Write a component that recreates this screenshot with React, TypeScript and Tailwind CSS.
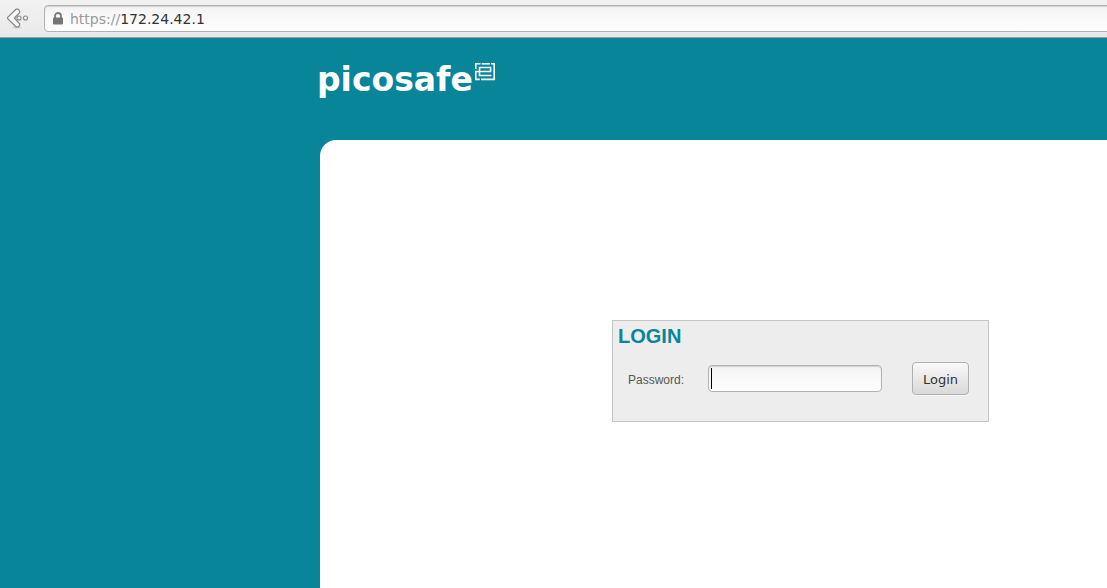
import React from "react";

function BackIcon() {
  return (
    <svg width="24" height="24" viewBox="0 0 24 24" fill="none" aria-hidden="true">
      <ellipse cx="12" cy="20.5" rx="4.5" ry="1" fill="#cfcfcf" />
      <path
        d="M11 2.2 2.6 10.4v1.2l8.4 8.2h2.2l1.4-1.4v-1.6L9.4 11l5.2-5.4V4L13.2 2.2Z"
        fill="#f6f6f6"
        stroke="#858585"
        strokeWidth="1.2"
        strokeLinejoin="round"
      />
      <circle cx="14" cy="11" r="2" fill="#f8f8f8" stroke="#858585" strokeWidth="1.1" />
      <circle cx="20.5" cy="11" r="2" fill="#f8f8f8" stroke="#858585" strokeWidth="1.1" />
    </svg>
  );
}

function LockIcon() {
  return (
    <svg width="12" height="13" viewBox="0 0 12 13" fill="none" aria-hidden="true">
      <path d="M3 6V4a3 3 0 0 1 6 0v2" stroke="#7a7a7a" strokeWidth="1.8" />
      <rect x="1" y="5.5" width="10" height="7" rx="1" fill="#757575" />
    </svg>
  );
}

function ChipMark() {
  return (
    <svg width="20" height="18" viewBox="0 0 20 18" fill="none" stroke="#ffffff" strokeWidth="1.6" aria-hidden="true">
      <path d="M0.8 6V0.8H5.5" />
      <path d="M6.7 0.8H14.8" />
      <path d="M16 0.8H19.2V16.4H6" />
      <path d="M4.8 16.4H0.8V8.5H15.6V4.5H4.5V12.5H16.4" />
    </svg>
  );
}

export default function App() {
  return (
    <div className="flex min-h-screen flex-col overflow-hidden bg-[#088599]">
      <nav className="flex h-[38px] items-center border-b border-[#9c9c9c] bg-linear-to-b from-[#f2f2f2] to-[#e9e9e9] pl-[5px]">
        <button type="button" aria-label="Back" className="mr-[15px] shrink-0">
          <BackIcon />
        </button>
        <div className="-mr-1 flex h-[27px] flex-1 items-center rounded-[4px] border border-[#b3b3b3] bg-linear-to-b from-[#f3f3f3] to-white pl-[7px] shadow-[inset_0_1px_1px_#d0d0d0]">
          <LockIcon />
          <a
            href="https://172.24.42.1"
            className="ml-[6px] font-['DejaVu_Sans',sans-serif] text-[14px] leading-5 text-[#333333]"
          >
            <span className="text-[#999999]">https://</span>172.24.42.1
          </a>
        </div>
      </nav>

      <header className="flex h-[102px] items-start pt-[22px] pl-[317px]">
        <h1 className="font-['DejaVu_Sans',sans-serif] text-[33px] leading-10 font-bold text-white">picosafe</h1>
        <span className="mt-[3px] ml-[2px]">
          <ChipMark />
        </span>
      </header>

      <main className="ml-80 flex-1 rounded-tl-2xl bg-white pt-[180px] pl-[292px]">
        <form
          className="h-[102px] w-[377px] border border-[#c6c6c6] bg-[#ededed] font-['Liberation_Sans',sans-serif]"
          onSubmit={(event) => event.preventDefault()}
        >
          <h2 className="px-[5px] pt-[3px] text-[20px] leading-6 font-bold text-[#088599]">LOGIN</h2>
          <div className="mt-[14px] flex items-center pr-[19px] pl-[15px]">
            <label htmlFor="password" className="w-20 pt-0.5 text-[12px] leading-4 text-[#555555]">
              Password:
            </label>
            <div className="relative">
              <input
                id="password"
                type="password"
                className="block h-[27px] w-[174px] rounded-[4px] border border-[#b3b3b3] bg-linear-to-b from-[#f3f3f3] to-white px-[2px] text-[18px] caret-transparent shadow-[inset_0_1px_1px_#d0d0d0] outline-none"
              />
              <span className="pointer-events-none absolute top-[3px] left-[3px] h-[21px] w-px bg-black" />
            </div>
            <button
              type="submit"
              className="ml-auto h-[33px] w-[57px] rounded-[4px] border border-[#b0b0b0] bg-linear-to-b from-[#f9f9f9] to-[#d9d9d9] pt-0.5 font-['DejaVu_Sans',sans-serif] text-[13px] leading-5 text-[#333333] shadow-[0_1px_0_#f8f8f8]"
            >
              Login
            </button>
          </div>
        </form>
      </main>
    </div>
  );
}
